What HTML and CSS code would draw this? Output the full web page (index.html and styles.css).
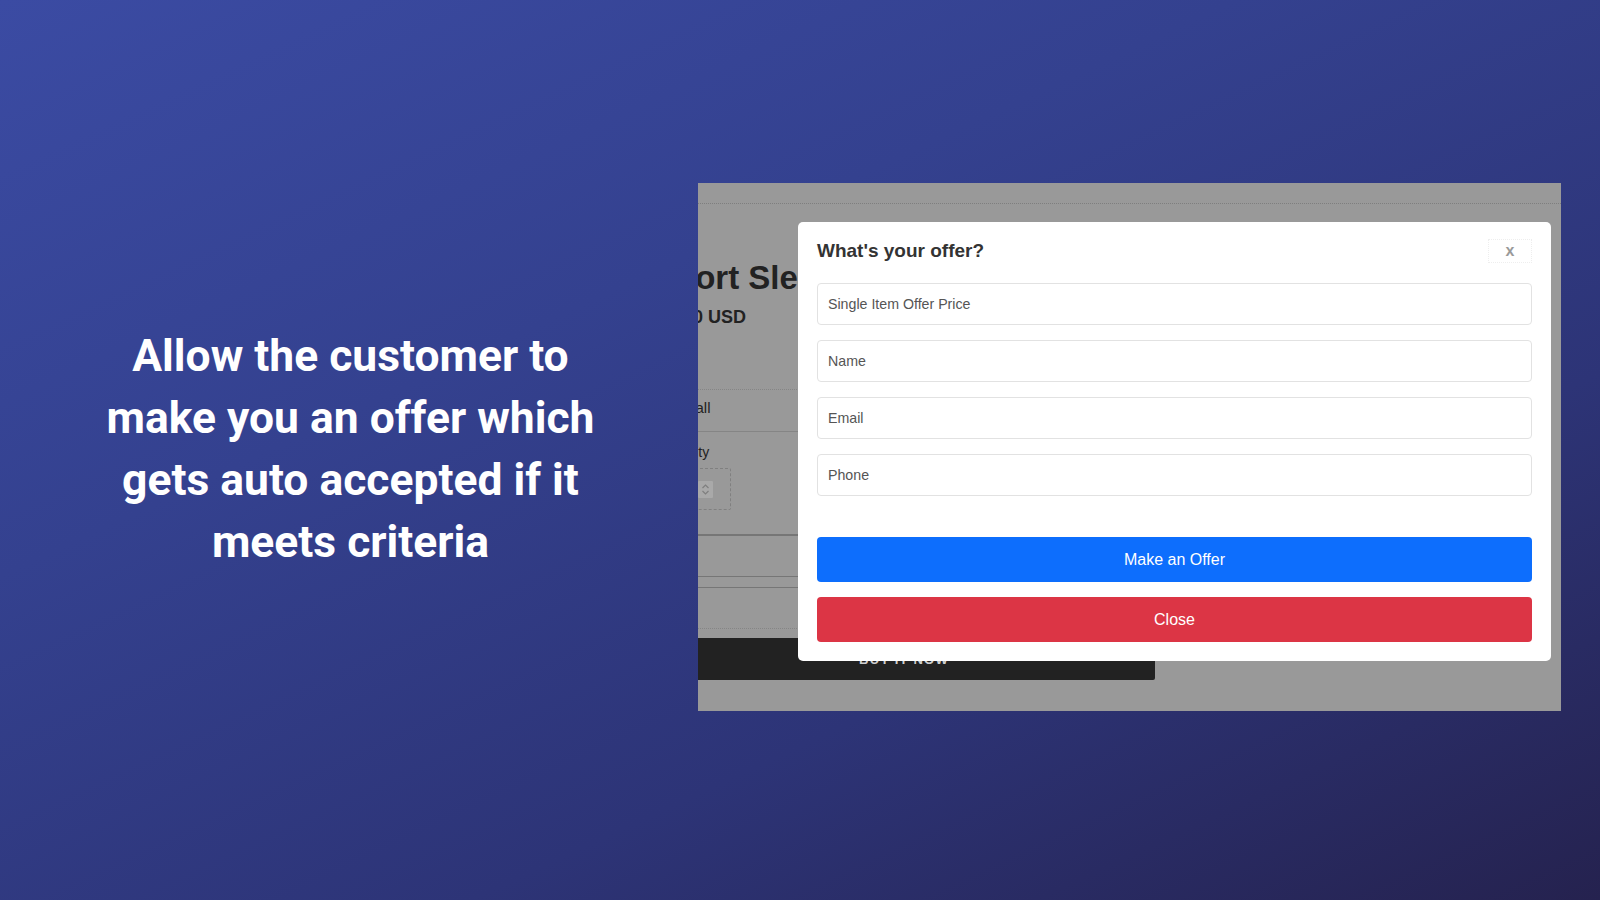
FILE: index.html
```html
<!DOCTYPE html>
<html lang="en">
<head>
<meta charset="utf-8">
<title>Make an Offer</title>
<link rel="stylesheet" href="styles.css">
</head>
<body>
<main class="slide">
  <section class="pitch">
    <h1 class="pitch-text">Allow the customer to<br>make you an offer which<br>gets auto accepted if it<br>meets criteria</h1>
  </section>
  <section class="shot">
    <div class="product">
      <div class="topbar"></div>
      <h2 class="p-title">Short Sleeve Tee</h2>
      <div class="p-price">$20.00 USD</div>
      <div class="p-option">Small</div>
      <div class="p-qty-label">Quantity</div>
      <div class="p-qty">
        <svg class="spin" width="15" height="17" viewBox="0 0 15 17" aria-hidden="true">
          <rect x="0" y="0" width="15" height="17" rx="1" fill="#a9a9a9"/>
          <path d="M4.5 7 L7.5 4 L10.5 7" fill="none" stroke="#7f7f7f" stroke-width="1.2"/>
          <path d="M4.5 10 L7.5 13 L10.5 10" fill="none" stroke="#7f7f7f" stroke-width="1.2"/>
        </svg>
      </div>
      <div class="p-field"></div>
      <div class="p-field2"></div>
      <div class="p-buy">BUY IT NOW</div>
    </div>
    <div class="modal">
      <div class="modal-head">
        <h3 class="modal-title">What's your offer?</h3>
        <button class="modal-x" type="button">x</button>
      </div>
      <div class="modal-fields">
        <input class="field" type="text" placeholder="Single Item Offer Price">
        <input class="field" type="text" placeholder="Name">
        <input class="field" type="text" placeholder="Email">
        <input class="field" type="text" placeholder="Phone">
      </div>
      <div class="modal-actions">
        <button class="btn btn-offer" type="button">Make an Offer</button>
        <button class="btn btn-close" type="button">Close</button>
      </div>
    </div>
  </section>
</main>
</body>
</html>
```

FILE: styles.css
```css
* { box-sizing: border-box; }
html, body { margin: 0; padding: 0; }
body { width: 1600px; height: 900px; overflow: hidden; }

.slide {
  width: 1600px;
  height: 900px;
  display: flex;
  align-items: center;
  background: linear-gradient(155deg, #3b4ba3 0%, #34418f 35%, #2d3477 68%, #25224f 100%);
}

.pitch {
  width: 698px;
  flex: none;
  padding-left: 3px;
  display: flex;
  justify-content: center;
}
.pitch-text {
  margin: 0;
  font-family: Roboto, "Liberation Sans", sans-serif;
  font-weight: 700;
  font-size: 44.4px;
  line-height: 61.8px;
  color: #ffffff;
  text-align: center;
  white-space: nowrap;
}

.shot {
  position: relative;
  flex: none;
  width: 863px;
  height: 528px;
  margin-bottom: 6px;
  background: #999999;
  overflow: hidden;
  font-family: "Liberation Sans", Arial, sans-serif;
}

.product {
  width: 502px;
  margin-left: -45px;
  color: #222222;
}
.topbar {
  height: 21px;
  margin-left: 45px;
  width: 863px;
  border-bottom: 1px dotted #7e7e7e;
}
.p-title {
  margin: 54px 0 0 0;
  font-size: 33px;
  font-weight: 700;
  line-height: 40px;
  white-space: nowrap;
}
.p-price {
  margin: 9px 0 0 -5px;
  font-size: 18px;
  font-weight: 700;
  line-height: 21px;
  white-space: nowrap;
}
.p-option {
  margin-top: 61px;
  margin-left: 20px;
  border-top: 1px dotted #858585;
  border-bottom: 1px solid #858585;
  padding: 8px 0 13px 0;
  font-size: 15px;
  line-height: 20px;
}
.p-qty-label {
  margin: 10px 0 0 4px;
  font-size: 14px;
  line-height: 20px;
}
.p-qty {
  margin-top: 6px;
  width: 78px;
  height: 42px;
  border: 1px dashed #808080;
  border-radius: 2px;
  display: flex;
  align-items: center;
  justify-content: flex-end;
  padding-right: 17px;
}
.spin { display: block; }
.p-field {
  margin-top: 24px;
  height: 43px;
  border-top: 2px solid #767676;
  border-bottom: 1px solid #767676;
}
.p-field2 {
  margin-top: 10px;
  height: 42px;
  border-top: 1px solid #767676;
  border-bottom: 1px dotted #858585;
}
.p-buy {
  margin-top: 9px;
  height: 42px;
  border-radius: 2px;
  background: #222222;
  color: #cfcfcf;
  font-size: 13px;
  font-weight: 700;
  letter-spacing: 1.2px;
  display: flex;
  align-items: center;
  justify-content: center;
}

.modal {
  position: absolute;
  left: 100px;
  top: 39px;
  width: 753px;
  background: #ffffff;
  border-radius: 5px;
  padding: 17px 19px 19px 19px;
}
.modal-head {
  display: flex;
  justify-content: space-between;
  align-items: center;
  height: 24px;
  margin-bottom: 20px;
}
.modal-title {
  margin: 0;
  font-size: 19px;
  font-weight: 700;
  line-height: 24px;
  color: #333333;
}
.modal-x {
  width: 44px;
  height: 24px;
  padding: 0;
  margin: 0;
  border: 1px dotted #eeeeee;
  background: transparent;
  color: #9a9a9a;
  font-family: "Liberation Sans", Arial, sans-serif;
  font-size: 16px;
  font-weight: 700;
  line-height: 22px;
}
.modal-fields {
  display: flex;
  flex-direction: column;
  gap: 15px;
}
.field {
  display: block;
  width: 100%;
  height: 42px;
  margin: 0;
  padding: 0 10px;
  border: 1px solid #e2e2e2;
  border-radius: 4px;
  background: #ffffff;
  font-family: "Liberation Sans", Arial, sans-serif;
  font-size: 14.2px;
  color: #333333;
  outline: none;
}
.field::placeholder { color: #555555; opacity: 1; }
.modal-actions {
  margin-top: 41px;
  display: flex;
  flex-direction: column;
  gap: 15px;
}
.btn {
  display: block;
  width: 100%;
  height: 45px;
  margin: 0;
  border: 0;
  border-radius: 4px;
  color: #ffffff;
  font-family: "Liberation Sans", Arial, sans-serif;
  font-size: 16px;
  line-height: 20px;
}
.btn-offer { background: #0d6efd; }
.btn-close { background: #dc3545; }
```
